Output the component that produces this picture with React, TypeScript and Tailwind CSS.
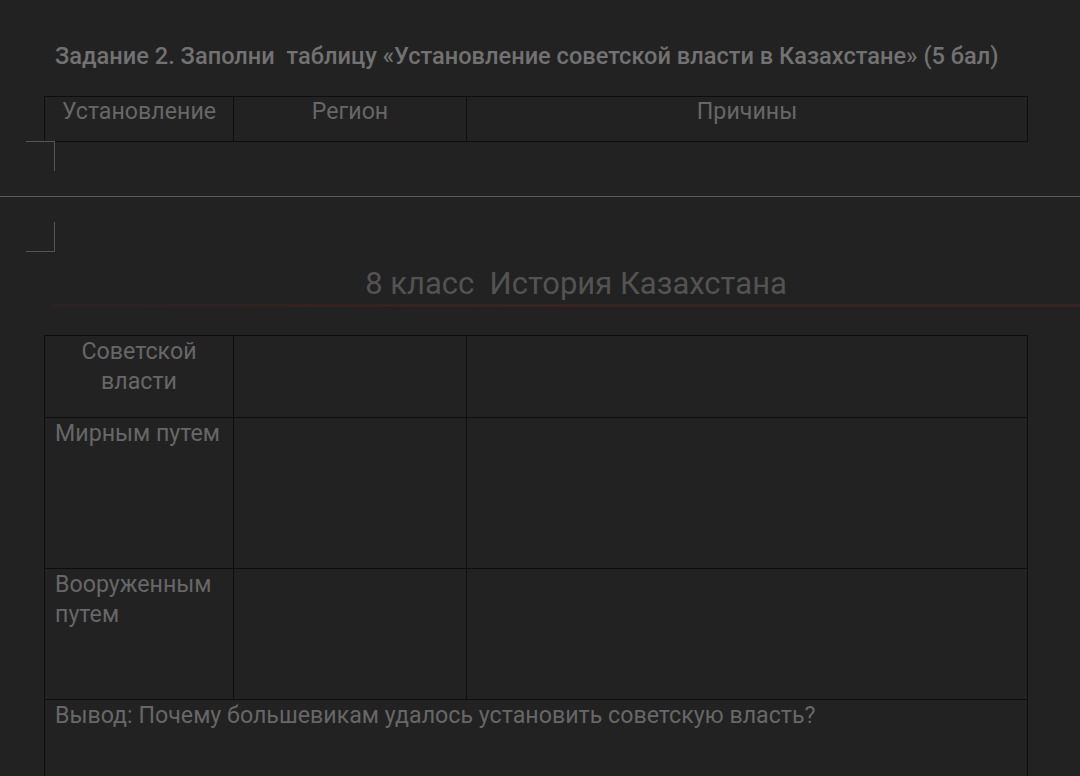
import React from "react";

export default function App() {
  const font = { fontFamily: "Roboto, 'Noto Sans', sans-serif" };
  return (
    <div className="w-[1080px] h-[776px] overflow-hidden bg-[#222222] text-[#676767]" style={font}>
      {/* Top page part */}
      <div className="h-[196px] pt-[41px]">
        <div className="pl-[55px] text-[23.6px] leading-[30px] font-medium text-[#727272] whitespace-pre">
          Задание 2. Заполни  таблицу «Установление советской власти в Казахстане» (5 бал)
        </div>
        <div className="ml-[44px] mt-[25px] w-[984px] border border-[#0e0e0e] flex text-[23.2px] leading-[28px] h-[46px]">
          <div className="w-[189px] border-r border-[#0e0e0e] text-center">Установление</div>
          <div className="w-[233px] border-r border-[#0e0e0e] text-center">Регион</div>
          <div className="flex-1 text-center">Причины</div>
        </div>
        <div className="ml-[26px] -mt-px w-[29px] h-[30px] border-t border-r border-[#555]" />
      </div>
      <div className="h-px bg-[#5c5c5c]" />
      {/* Second page part */}
      <div className="ml-[26px] mt-[25px] w-[29px] h-[30px] border-b border-r border-[#555]" />
      <div className="pl-[72px] mt-[14px] text-center text-[31px] leading-[36px] text-[#535353]">
        8 класс&nbsp; История Казахстана
      </div>
      <div className="ml-[52px] mt-[2px] h-[3px] bg-gradient-to-r from-[#2a2222] via-[#3a2222] to-[#3a2222]" />
      <div className="ml-[44px] mt-[28px] w-[984px] border-l border-t border-r border-[#0e0e0e] text-[23.2px] leading-[30px]">
        <div className="flex h-[82px] border-b border-[#0e0e0e]">
          <div className="w-[189px] border-r border-[#0e0e0e] text-center">Советской<br />власти</div>
          <div className="w-[233px] border-r border-[#0e0e0e]" />
          <div className="flex-1" />
        </div>
        <div className="flex h-[151px] border-b border-[#0e0e0e]">
          <div className="w-[189px] border-r border-[#0e0e0e] pl-[10px]">Мирным путем</div>
          <div className="w-[233px] border-r border-[#0e0e0e]" />
          <div className="flex-1" />
        </div>
        <div className="flex h-[131px] border-b border-[#0e0e0e]">
          <div className="w-[189px] border-r border-[#0e0e0e] pl-[10px]">Вооруженным<br />путем</div>
          <div className="w-[233px] border-r border-[#0e0e0e]" />
          <div className="flex-1" />
        </div>
        <div className="h-[100px] pl-[10px]">Вывод: Почему большевикам удалось установить советскую власть?</div>
      </div>
    </div>
  );
}
